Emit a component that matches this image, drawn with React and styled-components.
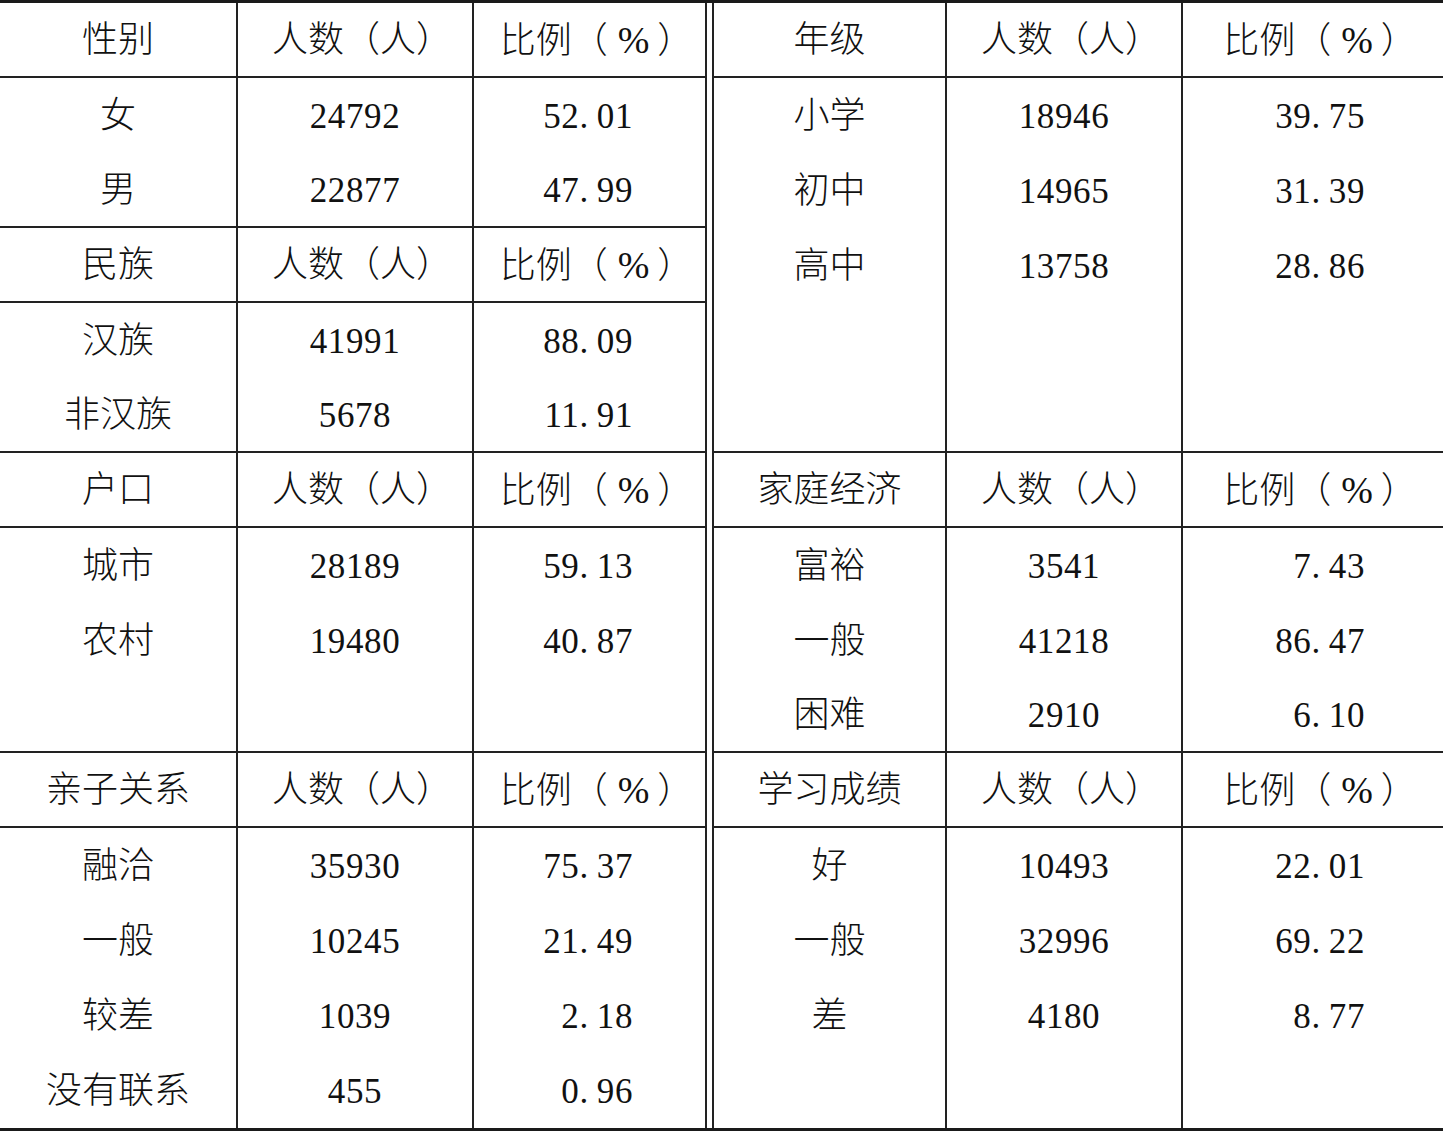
import React from 'react'
import styled, { createGlobalStyle } from 'styled-components'

const GlobalStyle = createGlobalStyle`
  html, body {
    margin: 0;
    padding: 0;
    background: #ffffff;
  }
  body {
    font-family: "Liberation Serif", "Noto Sans CJK SC", serif;
    color: #111111;
  }
`

const LEFT_COLS = '238px 236px 231px'
const RIGHT_COLS = '233px 236px 260px'

const leftSections = [
  {
    head: ['性别', '人数（人）', '比例（%）'],
    rows: [['女', '24792', '52.01'], ['男', '22877', '47.99']],
  },
  {
    head: ['民族', '人数（人）', '比例（%）'],
    rows: [['汉族', '41991', '88.09'], ['非汉族', '5678', '11.91']],
  },
  {
    head: ['户口', '人数（人）', '比例（%）'],
    rows: [['城市', '28189', '59.13'], ['农村', '19480', '40.87'], null],
  },
  {
    head: ['亲子关系', '人数（人）', '比例（%）'],
    rows: [
      ['融洽', '35930', '75.37'],
      ['一般', '10245', '21.49'],
      ['较差', '1039', '2.18'],
      ['没有联系', '455', '0.96'],
    ],
  },
]

const rightSections = [
  {
    head: ['年级', '人数（人）', '比例（%）'],
    rows: [['小学', '18946', '39.75'], ['初中', '14965', '31.39'], ['高中', '13758', '28.86'], null, null],
  },
  {
    head: ['家庭经济', '人数（人）', '比例（%）'],
    rows: [['富裕', '3541', '7.43'], ['一般', '41218', '86.47'], ['困难', '2910', '6.10']],
  },
  {
    head: ['学习成绩', '人数（人）', '比例（%）'],
    rows: [['好', '10493', '22.01'], ['一般', '32996', '69.22'], ['差', '4180', '8.77'], null],
  },
]

const Table = styled.div`
  display: flex;
  gap: 5px;
  width: 1443px;
  border-top: 3px solid #1a1a1a;
  border-bottom: 3px solid #1a1a1a;
  box-sizing: border-box;
`

const Half = styled.div`
  display: flex;
  flex-direction: column;
  border-${(p) => (p.$side === 'left' ? 'right' : 'left')}: 2px solid #222222;
`

const Row = styled.div`
  display: grid;
  grid-template-columns: ${(p) => p.$cols};
  height: 75px;
  box-sizing: border-box;
  border-bottom: ${(p) => (p.$line ? '2px solid #222222' : 'none')};
`

const Cell = styled.div`
  display: flex;
  align-items: center;
  justify-content: ${(p) => (p.$align === 'right' ? 'flex-end' : 'center')};
  padding-right: ${(p) => (p.$align === 'right' ? p.$pad : 0)}px;
  box-sizing: border-box;
  border-right: 2px solid #222222;
  font-size: 36px;
  font-weight: 300;
  line-height: 1;
  white-space: nowrap;
  padding-top: 1px;

  &:last-child {
    border-right: none;
  }
`

const Head = styled.span`
  padding-left: ${(p) => (p.$paren ? 14 : 0)}px;
`

const Num = styled.span`
  font-family: "Liberation Serif", serif;
  font-weight: 400;
  font-size: 35px;
  letter-spacing: 0.6px;
`

const Dot = styled.span`
  margin-right: 8px;
`

const Pct = styled.span`
  font-family: "Liberation Serif", serif;
  font-weight: 400;
  font-size: 38px;
  margin: 0 8px 0 10px;
`

function Decimal({ value }) {
  const [a, b] = value.split('.')
  return (
    <Num>
      {a}
      <Dot>.</Dot>
      {b}
    </Num>
  )
}

function HeadText({ text }) {
  const paren = text.includes('（')
  if (text === '比例（%）') {
    return (
      <Head $paren>
        比例（<Pct>%</Pct>）
      </Head>
    )
  }
  return <Head $paren={paren}>{text}</Head>
}

function TableHalf({ side, sections, cols, pad }) {
  return (
    <Half $side={side}>
      {sections.map((sec, si) => (
        <React.Fragment key={si}>
          <Row $cols={cols} $line>
            {sec.head.map((h, i) => (
              <Cell key={i}>
                <HeadText text={h} />
              </Cell>
            ))}
          </Row>
          {sec.rows.map((r, ri) => {
            const line = ri === sec.rows.length - 1 && si < sections.length - 1
            return (
              <Row key={ri} $cols={cols} $line={line}>
                <Cell>{r ? r[0] : ''}</Cell>
                <Cell>{r ? <Num>{r[1]}</Num> : ''}</Cell>
                <Cell $align="right" $pad={pad}>
                  {r ? <Decimal value={r[2]} /> : ''}
                </Cell>
              </Row>
            )
          })}
        </React.Fragment>
      ))}
    </Half>
  )
}

export default function App() {
  return (
    <>
      <GlobalStyle />
      <Table>
        <TableHalf side="left" sections={leftSections} cols={LEFT_COLS} pad={72} />
        <TableHalf side="right" sections={rightSections} cols={RIGHT_COLS} pad={78} />
      </Table>
    </>
  )
}
